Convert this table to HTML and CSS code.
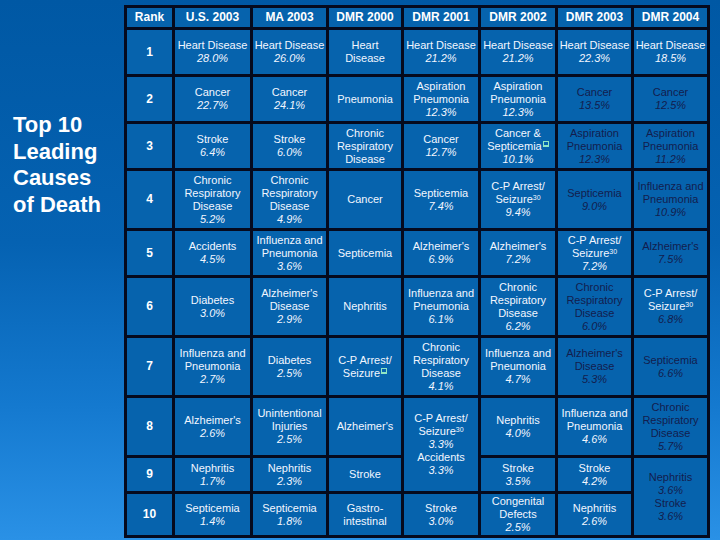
FILE: index.html
```html
<!DOCTYPE html>
<html>
<head>
<meta charset="utf-8">
<link rel="stylesheet" href="styles.css">
</head>
<body>
<div class="slide">
  <div class="side">
    <h1 class="title">Top 10<br>Leading<br>Causes<br>of Death</h1>
  </div>
  <div class="grid">
    <div class="c h">Rank</div><div class="c h">U.S. 2003</div><div class="c h">MA 2003</div><div class="c h">DMR 2000</div><div class="c h">DMR 2001</div><div class="c h">DMR 2002</div><div class="c h">DMR 2003</div><div class="c h">DMR 2004</div>

    <div class="c r">1</div>
    <div class="c"><span>Heart Disease</span><i>28.0%</i></div>
    <div class="c"><span>Heart Disease</span><i>26.0%</i></div>
    <div class="c"><span>Heart</span><span>Disease</span></div>
    <div class="c"><span>Heart Disease</span><i>21.2%</i></div>
    <div class="c"><span>Heart Disease</span><i>21.2%</i></div>
    <div class="c"><span>Heart Disease</span><i>22.3%</i></div>
    <div class="c"><span>Heart Disease</span><i>18.5%</i></div>

    <div class="c r">2</div>
    <div class="c"><span>Cancer</span><i>22.7%</i></div>
    <div class="c"><span>Cancer</span><i>24.1%</i></div>
    <div class="c"><span>Pneumonia</span></div>
    <div class="c"><span>Aspiration</span><span>Pneumonia</span><i>12.3%</i></div>
    <div class="c"><span>Aspiration</span><span>Pneumonia</span><i>12.3%</i></div>
    <div class="c d"><span>Cancer</span><i>13.5%</i></div>
    <div class="c d"><span>Cancer</span><i>12.5%</i></div>

    <div class="c r">3</div>
    <div class="c"><span>Stroke</span><i>6.4%</i></div>
    <div class="c"><span>Stroke</span><i>6.0%</i></div>
    <div class="c"><span>Chronic</span><span>Respiratory</span><span>Disease</span></div>
    <div class="c"><span>Cancer</span><i>12.7%</i></div>
    <div class="c"><span>Cancer &amp;</span><span>Septicemia<b class="fn"></b></span><i>10.1%</i></div>
    <div class="c d"><span>Aspiration</span><span>Pneumonia</span><i>12.3%</i></div>
    <div class="c d"><span>Aspiration</span><span>Pneumonia</span><i>11.2%</i></div>

    <div class="c r">4</div>
    <div class="c"><span>Chronic</span><span>Respiratory</span><span>Disease</span><i>5.2%</i></div>
    <div class="c"><span>Chronic</span><span>Respiratory</span><span>Disease</span><i>4.9%</i></div>
    <div class="c"><span>Cancer</span></div>
    <div class="c"><span>Septicemia</span><i>7.4%</i></div>
    <div class="c"><span>C-P Arrest/</span><span>Seizure<sup>30</sup></span><i>9.4%</i></div>
    <div class="c d"><span>Septicemia</span><i>9.0%</i></div>
    <div class="c d"><span>Influenza and</span><span>Pneumonia</span><i>10.9%</i></div>

    <div class="c r">5</div>
    <div class="c"><span>Accidents</span><i>4.5%</i></div>
    <div class="c"><span>Influenza and</span><span>Pneumonia</span><i>3.6%</i></div>
    <div class="c"><span>Septicemia</span></div>
    <div class="c"><span>Alzheimer's</span><i>6.9%</i></div>
    <div class="c"><span>Alzheimer's</span><i>7.2%</i></div>
    <div class="c"><span>C-P Arrest/</span><span>Seizure<sup>30</sup></span><i>7.2%</i></div>
    <div class="c d"><span>Alzheimer's</span><i>7.5%</i></div>

    <div class="c r">6</div>
    <div class="c"><span>Diabetes</span><i>3.0%</i></div>
    <div class="c"><span>Alzheimer's</span><span>Disease</span><i>2.9%</i></div>
    <div class="c"><span>Nephritis</span></div>
    <div class="c"><span>Influenza and</span><span>Pneumonia</span><i>6.1%</i></div>
    <div class="c"><span>Chronic</span><span>Respiratory</span><span>Disease</span><i>6.2%</i></div>
    <div class="c d"><span>Chronic</span><span>Respiratory</span><span>Disease</span><i>6.0%</i></div>
    <div class="c"><span>C-P Arrest/</span><span>Seizure<sup>30</sup></span><i class="dk">6.8%</i></div>

    <div class="c r">7</div>
    <div class="c"><span>Influenza and</span><span>Pneumonia</span><i>2.7%</i></div>
    <div class="c"><span>Diabetes</span><i>2.5%</i></div>
    <div class="c"><span>C-P Arrest/</span><span>Seizure<b class="fn"></b></span></div>
    <div class="c"><span>Chronic</span><span>Respiratory</span><span>Disease</span><i>4.1%</i></div>
    <div class="c"><span>Influenza and</span><span>Pneumonia</span><i>4.7%</i></div>
    <div class="c d"><span>Alzheimer's</span><span>Disease</span><i>5.3%</i></div>
    <div class="c d"><span>Septicemia</span><i>6.6%</i></div>

    <div class="c r">8</div>
    <div class="c"><span>Alzheimer's</span><i>2.6%</i></div>
    <div class="c"><span>Unintentional</span><span>Injuries</span><i>2.5%</i></div>
    <div class="c"><span>Alzheimer's</span></div>
    <div class="c span2"><span>C-P Arrest/</span><span>Seizure<sup>30</sup></span><i>3.3%</i><span>Accidents</span><i>3.3%</i></div>
    <div class="c"><span>Nephritis</span><i>4.0%</i></div>
    <div class="c"><span>Influenza and</span><span>Pneumonia</span><i>4.6%</i></div>
    <div class="c d"><span>Chronic</span><span>Respiratory</span><span>Disease</span><i>5.7%</i></div>

    <div class="c r">9</div>
    <div class="c"><span>Nephritis</span><i>1.7%</i></div>
    <div class="c"><span>Nephritis</span><i>2.3%</i></div>
    <div class="c"><span>Stroke</span></div>
    <div class="c"><span>Stroke</span><i>3.5%</i></div>
    <div class="c"><span>Stroke</span><i>4.2%</i></div>
    <div class="c d span2"><span>Nephritis</span><i>3.6%</i><span>Stroke</span><i>3.6%</i></div>

    <div class="c r">10</div>
    <div class="c"><span>Septicemia</span><i>1.4%</i></div>
    <div class="c"><span>Septicemia</span><i>1.8%</i></div>
    <div class="c"><span>Gastro-</span><span>intestinal</span></div>
    <div class="c"><span>Stroke</span><i>3.0%</i></div>
    <div class="c"><span>Congenital</span><span>Defects</span><i>2.5%</i></div>
    <div class="c"><span>Nephritis</span><i>2.6%</i></div>
  </div>
</div>
</body>
</html>
```

FILE: styles.css
```css
html, body {
  margin: 0;
  padding: 0;
}
body {
  width: 720px;
  height: 540px;
  overflow: hidden;
  background: linear-gradient(to bottom, #0058a4 0%, #0562b2 45%, #1479cf 75%, #2a91e6 100%);
  font-family: "Liberation Sans", Arial, sans-serif;
}
.slide {
  display: flex;
  height: 540px;
}
.side {
  width: 124px;
  flex: none;
}
.title {
  margin: 112px 0 0 13px;
  font-size: 22px;
  line-height: 26.5px;
  font-weight: bold;
  color: #ffffff;
}
.grid {
  margin-top: 5px;
  align-self: flex-start;
  display: grid;
  grid-template-columns: 45px 75px 73px 72px 74px 74px 73px 73px;
  grid-template-rows: 19px 44px 44px 44px 57px 44px 57px 57px 57px 33px 41px;
  gap: 3px;
  padding: 3px;
  background: #050a1e;
}
.c {
  background: #0663ad;
  color: #f2f6ff;
  font-size: 11px;
  line-height: 13px;
  display: flex;
  flex-direction: column;
  align-items: center;
  justify-content: center;
  text-align: center;
  white-space: nowrap;
  overflow: hidden;
}
.c i {
  font-style: italic;
}
.c.d {
  color: #131d4e;
}
.c .dk {
  color: #131d4e;
}
.c.h {
  font-size: 12px;
  font-weight: bold;
  color: #ffffff;
}
.c.r {
  font-size: 12px;
  font-weight: bold;
  color: #ffffff;
}
.span2 {
  grid-row: span 2;
}
sup {
  font-size: 7px;
  line-height: 0;
  vertical-align: 3px;
}
.fn {
  display: inline-block;
  width: 6px;
  height: 6px;
  margin-left: 1px;
  border: 1px solid #8fe6c4;
  border-bottom: 2px solid #8fe6c4;
  vertical-align: 3px;
  box-sizing: border-box;
}
```
